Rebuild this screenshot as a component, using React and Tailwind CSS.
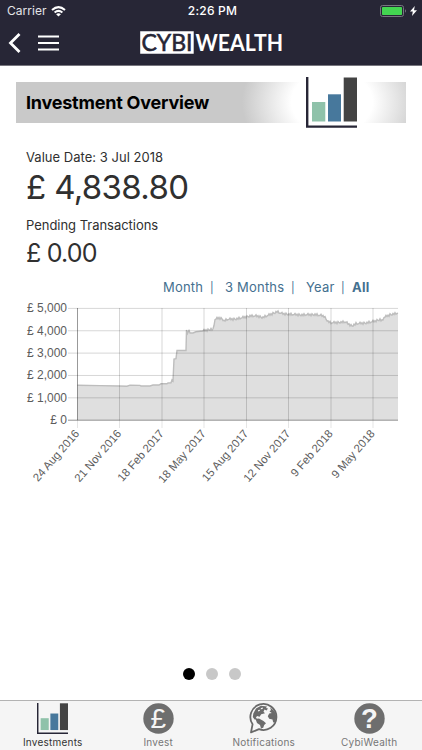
import React from "react";

const WIGGLE = [0, -1.1, 0.4, -0.5, 0.9, -0.8, 0.2, 0.7, -0.6, 0.5, -1, 0.6, 0.1];
const FLAT = [
  [77.5, 385.3], [100, 385.6], [119, 386], [127, 386.2], [130, 385.2], [140, 385.4], [141, 386], [150, 386],
  [153, 385], [159, 385], [161, 383.8], [167, 383.8], [168, 383], [171, 382.8], [172, 379.8], [173, 381],
  [174, 359], [176, 358.7], [177, 350.5], [186, 350.5], [186.5, 330], [187.5, 333.5], [189, 330.5],
  [190, 333], [193, 333], [196, 331.8], [203, 331],
];
const ROUGH = [
  [203, 331], [211, 329.2], [213, 330], [215, 319.5], [219, 318], [222, 318.8], [224, 321], [227, 319.5], [236, 319],
  [244, 317.5], [250, 316], [258, 316.2], [263, 317.5], [268, 315.5], [273, 313.5], [277, 311.8], [282, 313.7],
  [290, 314.5], [302, 315], [315, 314.6], [324, 316.2], [328, 321.5], [331, 323], [345, 322], [350, 325],
  [352, 326], [356, 323.8], [366, 323], [374, 321.5], [380, 319.5], [382, 321], [384, 317.5], [390, 314.8], [398, 313.2],
];

function buildSeries() {
  const pts = [...FLAT];
  let step = 0;
  for (let i = 0; i < ROUGH.length - 1; i++) {
    const [x0, y0] = ROUGH[i];
    const [x1, y1] = ROUGH[i + 1];
    for (let x = x0; x < x1; x += 1) {
      pts.push([x, y0 + ((y1 - y0) * (x - x0)) / (x1 - x0) + WIGGLE[step++ % WIGGLE.length] * 1.2]);
    }
  }
  pts.push([398, 313.2]);
  return pts.map((p) => p[0] + "," + p[1].toFixed(1)).join(" ");
}

const LINE = buildSeries();
const XS = [77.5, 119.5, 162, 204, 246.5, 288.5, 331, 373];
const DATES = ["24 Aug 2016", "21 Nov 2016", "18 Feb 2017", "18 May 2017", "15 Aug 2017", "12 Nov 2017", "9 Feb 2018", "9 May 2018"];
const VALUES = ["£ 5,000", "£ 4,000", "£ 3,000", "£ 2,000", "£ 1,000", "£ 0"];

function Chart() {
  return (
    <svg className="block h-[194px] w-full font-['Liberation_Sans',sans-serif]" viewBox="0 300 422 194">
      <polygon points={"77.5,420 " + LINE + " 398,420"} fill="#dfdfdf" />
      <polyline points={LINE} fill="none" stroke="#bdbdbd" strokeWidth="1.4" />
      {VALUES.map((v, i) => (
        <g key={v}>
          <path d={`M68 ${308.4 + i * 22.36}H398`} stroke={i === 5 ? "#777" : "#000"} strokeOpacity={i === 5 ? 0.8 : 0.16} />
          <text x="67" y={312.4 + i * 22.36} textAnchor="end" fontSize="12" fill="#5c5c5c">{v}</text>
        </g>
      ))}
      {XS.map((x, i) => (
        <g key={x}>
          <path d={`M${x} 308V420`} stroke="#000" strokeOpacity={i === 0 ? 0.4 : 0.16} />
          <path d={`M${x} 420V428`} stroke="#000" strokeOpacity="0.1" />
          <text transform={`translate(${x + 2.5} 434) rotate(-49)`} textAnchor="end" fontSize="11.4" fill="#5c5c5c">{DATES[i]}</text>
        </g>
      ))}
    </svg>
  );
}

function BarsIcon({ className }) {
  return (
    <svg className={className} viewBox="0 0 51 51" preserveAspectRatio="none">
      <path d="M1.2 0V49.6H51" fill="none" stroke="#272636" strokeWidth="2.4" />
      <path d="M6 25h13.3V44.5H6z" fill="#8fc2aa" />
      <path d="M22 17.3h13V44.5H22z" fill="#47789c" />
      <path d="M37.7 .5H51V44.5H37.7z" fill="#434343" />
    </svg>
  );
}

function Disc({ glyph, bold }) {
  return (
    <svg className="h-[31px] w-[31px] overflow-visible" viewBox="0 0 31 31">
      <circle cx="15.5" cy="15.5" r="15.2" fill="#6e6e6e" />
      {bold ? (
        <text x="15.5" y="25.4" textAnchor="middle" fontSize="27.5" fontWeight="700" fill="#f5f5f5" className="font-['Liberation_Sans',sans-serif]">{glyph}</text>
      ) : (
        <text x="15.3" y="25.2" textAnchor="middle" fontSize="28" fill="#f5f5f5" className="font-['Liberation_Sans',sans-serif]">{glyph}</text>
      )}
    </svg>
  );
}

function GlobeBubble() {
  return (
    <svg className="h-[31px] w-[29px]" viewBox="0 0 29 31">
      <path d="M3.6 21.2A13 13 0 1 1 10 26.2L2 29.4Z" fill="#f5f5f5" stroke="#686868" strokeWidth="1.8" strokeLinejoin="round" />
      <path d="M4.3 10.5 7 5.5 12 2.8 18 3.5 17 5 19 5.5 17.5 7.5 15.5 6.5 14.5 8.8 16 10.2 12.2 11.2 10.6 13.8 8 13 6.8 15 9 16.2 5.5 16.5 3.8 14Z" fill="#6b6b6b" />
      <path d="M6.5 16 10 15.4 14.5 18 17 20.2 15.2 22 14.2 24.7 12 25.4 11 22 8 20Z" fill="#6b6b6b" />
      <path d="M21 4.3 25.5 8.2 27.5 13.5 26.2 19 24.2 19.5 23.5 16.5 20.2 15.8 18.8 13.2 20.2 10.4 22.8 10 20.5 8.5 22 7Z" fill="#6b6b6b" />
      <path d="m12 5 2-.6-.4 1.5-2 .4zM9.2 7.1l2-.4-.6 1.4-1.7.4z" fill="#f5f5f5" />
    </svg>
  );
}

function Logo() {
  return (
    <svg className="h-[24px] w-[144px] overflow-visible font-[Lato,sans-serif]" viewBox="140 30 144 24">
      <path d="M140.2 31.2h53.5v22.5h-53.5z" fill="#fff" />
      <text x="141.5" y="51" fontSize="23.5" fontWeight="400" fill="#272636" stroke="#272636" strokeWidth=".6" textLength="51" lengthAdjust="spacingAndGlyphs">CYBI</text>
      <text x="195.5" y="51" fontSize="23.5" fontWeight="700" fill="#fff" textLength="87.5" lengthAdjust="spacingAndGlyphs">WEALTH</text>
    </svg>
  );
}

function Header() {
  return (
    <header className="h-[66px] border-b border-[#77767e] bg-[#272636] text-white">
      <div className="grid h-[22px] grid-cols-3 items-center text-[12px]">
        <div className="flex items-center gap-[4px] pl-[7px]">
          <span className="tracking-[0.05px] text-[#e4e4e7]">Carrier</span>
          <svg className="h-[11px] w-[15px]" viewBox="0 0 15 11" fill="none" stroke="#fff" strokeWidth="2">
            <path d="M1 4Q7.5-1.7 14 4M3.6 6.5Q7.5 3.2 11.4 6.5" />
            <path d="m5.1 8.2 2.4 2.4 2.4-2.4Q7.5 6.3 5.1 8.2Z" fill="#fff" stroke="none" />
          </svg>
        </div>
        <div className="pl-[3px] text-center font-medium tracking-[0.2px]">2:26 PM</div>
        <div className="flex items-center justify-end gap-[3px] pr-[5px]">
          <svg className="h-[12px] w-[27px]" viewBox="0 0 27 12">
            <rect x=".5" y=".5" width="23" height="11" rx="2" fill="none" stroke="#777580" />
            <rect x="2" y="2" width="20" height="8" rx=".8" fill="#43d551" />
            <path d="M25 4.3q2 1.7 0 3.4z" fill="#777580" />
          </svg>
          <svg className="h-[10px] w-[7px]" viewBox="0 0 7 10"><path d="M4.8 0 0 5.6h2.8L2 10 7 4.2H4z" fill="#fff" /></svg>
        </div>
      </div>
      <div className="flex h-[42px] items-center pl-[8px]">
        <svg className="h-[20px] w-[13px]" viewBox="0 0 13 20"><path d="M11.5 1 2.5 10l9 9" fill="none" stroke="#fff" strokeWidth="2.8" /></svg>
        <svg className="ml-[17px] h-[16px] w-[21px]" viewBox="0 0 21 16"><path d="M0 1.5h21M0 8h21M0 14.5h21" stroke="#fff" strokeWidth="2" /></svg>
        <div className="ml-[81px] pb-[2px]"><Logo /></div>
      </div>
    </header>
  );
}

function Tab({ label, active, children }) {
  return (
    <div className="flex flex-1 flex-col items-center pt-[2px]">
      <div className="flex h-[32px] items-center justify-center">{children}</div>
      <span className={"mt-[1px] text-[10px] leading-[15px] tracking-[0.23px] " + (active ? "text-[#333]" : "text-[#777]")}>{label}</span>
    </div>
  );
}

export default function App() {
  return (
    <div className="flex h-[750px] w-[422px] flex-col overflow-hidden bg-white font-[Inter,sans-serif] text-[#303030]">
      <Header />
      <main className="flex flex-1 flex-col">
        <div className="mx-[16px] mt-[16px] flex h-[41px] items-center justify-between bg-[radial-gradient(ellipse_90px_70px_at_316px_20px,#fff_0%,#fff_45%,#c9c9c9_100%)] pl-[10px] pr-[49px]">
          <h1 className="pb-px text-[18px] font-bold tracking-[-0.22px] text-black">Investment Overview</h1>
          <BarsIcon className="h-[51px] w-[51px] shrink-0" />
        </div>
        <section className="pl-[26px]">
          <p className="mt-[26px] text-[13px] leading-[17px] tracking-[0.03px]">Value Date: 3 Jul 2018</p>
          <p className="h-[42px] text-[33px] leading-[42px] tracking-[-0.65px]">£ 4,838.80</p>
          <p className="mt-[8px] text-[13px] leading-[18px] tracking-[-0.03px]">Pending Transactions</p>
          <p className="mt-[2px] h-[34px] text-[25px] leading-[34px] tracking-[-0.8px]">£ 0.00</p>
        </section>
        <nav className="mt-[7px] flex h-[22px] items-center pl-[163px] text-[13px] tracking-[0.2px] text-[#44708f]">
          <span className="w-[47px]">Month</span>
          <span className="w-[15px] text-[11px]">|</span>
          <span className="w-[66px]">3 Months</span>
          <span className="w-[15px] text-[11px]">|</span>
          <span className="w-[35px]">Year</span>
          <span className="w-[11px] text-[11px]">|</span>
          <span className="font-bold">All</span>
        </nav>
        <div className="mt-px"><Chart /></div>
        <div className="mb-[20px] mt-auto flex justify-center gap-[11px] pl-[2px]">
          <i className="h-[12px] w-[12px] rounded-full bg-black" />
          <i className="h-[12px] w-[12px] rounded-full bg-[#c8c8c8]" />
          <i className="h-[12px] w-[12px] rounded-full bg-[#c8c8c8]" />
        </div>
      </main>
      <footer className="flex h-[50px] border-t border-[#b3b3b3] bg-[#f5f5f5]">
        <Tab label="Investments" active><BarsIcon className="h-[31px] w-[31px]" /></Tab>
        <Tab label="Invest"><Disc glyph="£" /></Tab>
        <Tab label="Notifications"><GlobeBubble /></Tab>
        <Tab label="CybiWealth"><Disc glyph="?" bold /></Tab>
      </footer>
    </div>
  );
}
